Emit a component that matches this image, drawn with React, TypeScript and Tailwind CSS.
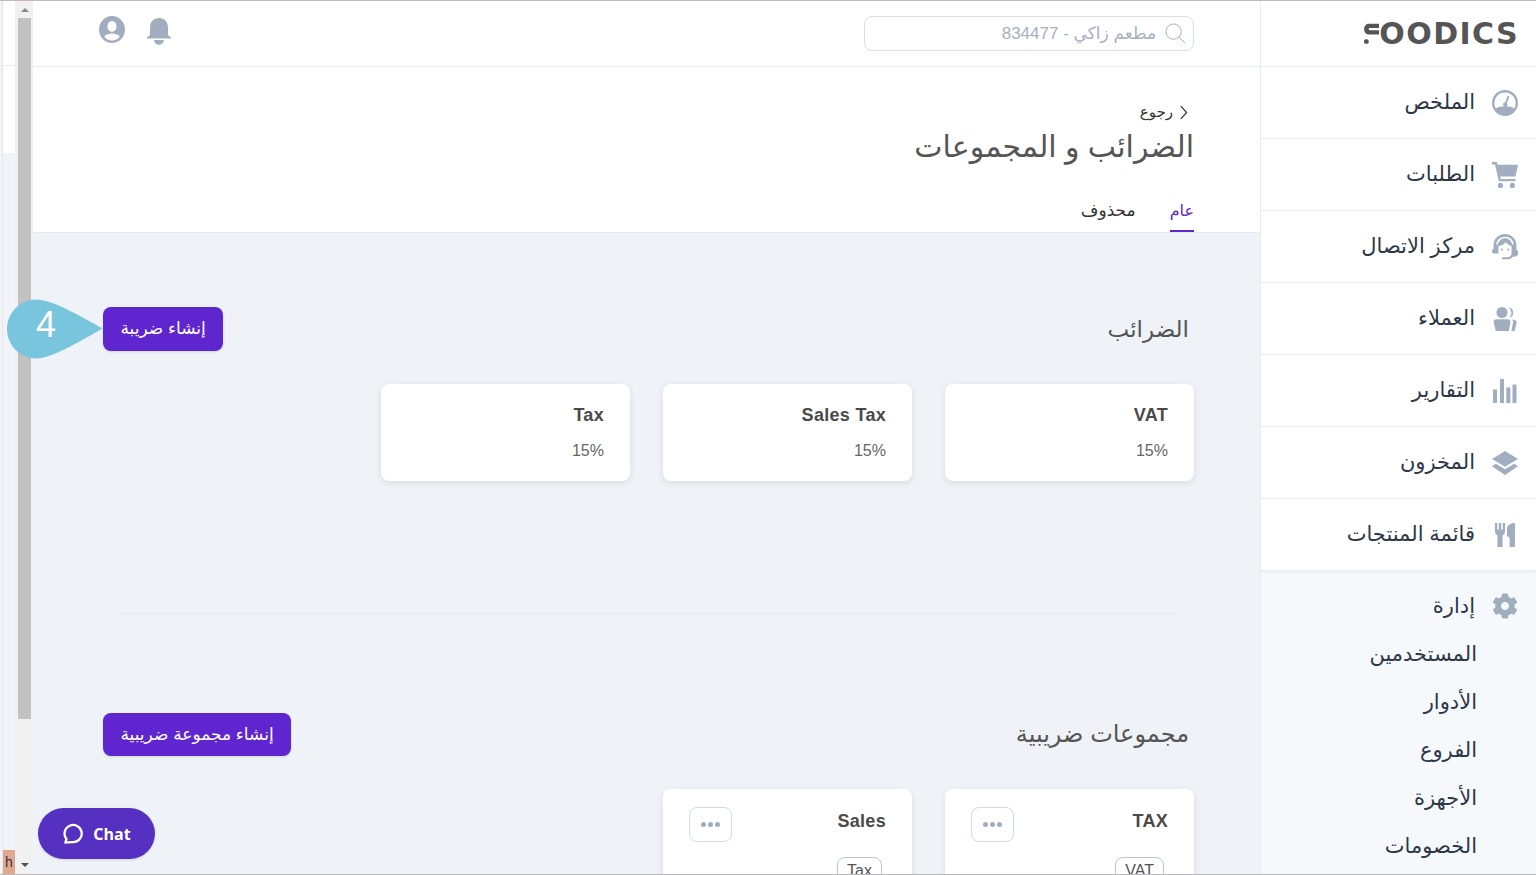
import React from 'react';
import { FaCog } from 'react-icons/fa';

const ICON = 'w-[26px] h-[26px] shrink-0 text-[#a0aec0]';
const ICON_NARROW = 'w-6 h-6 shrink-0 text-[#a0aec0]';

const GaugeIcon = () => (
  <svg viewBox="0 0 24 24" className={ICON} fill="currentColor">
    <path fillRule="evenodd" d="M12 0a12 12 0 1 1 0 24 12 12 0 0 1 0-24zm0 2.200a9.800 9.800 0 0 0-8.400 14.800C5.200 15.600 8.400 15 12 15s6.800.6 8.400 2A9.800 9.800 0 0 0 12 2.200z" />
    <path d="M14.400 5.400l1.700.7-2.300 6.100a2 2 0 1 1-1.700-.7z" />
  </svg>
);

const CartIcon = () => (
  <svg viewBox="0 0 24 24" className={ICON} fill="currentColor">
    <path d="M0 0h4.400l.9 2.600H24l-2.300 10.800H7.600l.5 2.200h13.600v2.200H6.300L2.800 2.200H0z" />
    <circle cx="7.800" cy="21.600" r="2.400" />
    <circle cx="18.800" cy="21.600" r="2.400" />
  </svg>
);

const HeadsetIcon = () => (
  <svg viewBox="0 0 24 24" className={ICON} fill="currentColor">
    <path fillRule="evenodd" d="M12 0c6.300 0 10.600 4.800 10.600 10.600v4.200l1.400 1v3.600l-3 1.600h-2.200a5 5 0 0 1-3 2.400H9.400v-2h5.200c2 0 3.400-1.600 3.400-3.700V11c-2.400-.3-4.200-1.800-5.200-3.600C11.400 9.600 9 11 6 11v7H1.600L0 17v-2.200l1.400-1v-3.200C1.400 4.800 5.700 0 12 0zm0 2.600c-4.400 0-7.800 3-8.200 7.200h1.400C6 6.400 8.700 4 12 4s6 2.400 6.800 5.800h1.400C19.800 5.600 16.400 2.600 12 2.600z" />
    <circle cx="9" cy="14.400" r="1" />
    <circle cx="15" cy="14.400" r="1" />
  </svg>
);

const UsersIcon = () => (
  <svg viewBox="0 0 24 24" className={ICON_NARROW} fill="currentColor">
    <circle cx="9" cy="5.500" r="5.500" />
    <path d="M15.500.300a5.500 5.500 0 0 1 1 10.600 7 7 0 0 0-1-10.600z" />
    <path d="M.5 15c0-1.600 1.200-2.800 2.800-2.800h11.400c1.600 0 2.800 1.200 2.800 2.800l-1.700 9H2.800z" />
    <path d="M19 12.400c2.500.2 4.800 1 4.800 3l-2.200 8.600h-3.200l1.600-8.800c0-1.100-.3-2-1-2.800z" />
  </svg>
);

const BarsIcon = () => (
  <svg viewBox="0 0 24 24" className={ICON_NARROW} fill="currentColor">
    <rect x="0" y="10.500" width="4" height="13.500" />
    <rect x="7" y="0" width="4" height="24" />
    <rect x="13.300" y="8.500" width="4" height="15.500" />
    <rect x="19.500" y="5.500" width="4" height="18.500" />
  </svg>
);

const LayersIcon = () => (
  <svg viewBox="0 0 24 24" className={ICON} fill="currentColor">
    <path d="M12 1l12 7.200-12 7.200L0 8.200z" />
    <path d="M3.600 12.800L12 17.800l8.400-5 3.600 2.200L12 23 0 15z" />
  </svg>
);

const CutleryIcon = () => (
  <svg viewBox="0 0 24 24" className={ICON_NARROW} fill="currentColor">
    <path d="M2 0h2.300v6.500h1.500V0h2.400v6.500h1.500V0H12v8c0 2.300-1 3.700-2.400 4.300V24H4.400V12.300C3 11.700 2 10.300 2 8z" />
    <path d="M22 0v24h-5.400v-9.500L14 13V6c0-3.500 3.500-6 8-6z" />
  </svg>
);

const navItems = [
  { label: 'الملخص', icon: <GaugeIcon /> },
  { label: 'الطلبات', icon: <CartIcon /> },
  { label: 'مركز الاتصال', icon: <HeadsetIcon /> },
  { label: 'العملاء', icon: <UsersIcon /> },
  { label: 'التقارير', icon: <BarsIcon /> },
  { label: 'المخزون', icon: <LayersIcon /> },
  { label: 'قائمة المنتجات', icon: <CutleryIcon /> },
];

const subItems = ['المستخدمين', 'الأدوار', 'الفروع', 'الأجهزة', 'الخصومات'];

const taxes = [
  { name: 'VAT', rate: '15%' },
  { name: 'Sales Tax', rate: '15%' },
  { name: 'Tax', rate: '15%' },
];

const groups = [
  { name: 'TAX', tag: 'VAT' },
  { name: 'Sales', tag: 'Tax' },
];

const Sidebar = () => (
  <aside className="w-[276px] shrink-0 border-l border-[#e6ebf5] bg-white flex flex-col">
    <div className="h-[66px] shrink-0 border-b border-[#e8edf5] flex items-center justify-end pr-[18px] flex-row-reverse">
      <div className="flex items-center" dir="ltr">
        <svg viewBox="0 0 16 22" className="w-[15px] h-[22px] text-[#555555]" fill="currentColor">
          <path d="M5 0h11v4.500H6c-1.300 0-1.300 2.500 0 2.500h10v4.500H5C-1.500 11.500-1.500 0 5 0z" />
          <rect x="0" y="16.500" width="5" height="5" rx="2" />
        </svg>
        <span className="font-['DejaVu_Sans',sans-serif] font-bold text-[30px] leading-none tracking-[1.400px] -mr-[1px] text-[#555555]">OODICS</span>
      </div>
    </div>
    {navItems.map((item) => (
      <div key={item.label} className="h-[72px] shrink-0 border-b border-[#e8edf5] flex items-center gap-[17px] pr-[18px] text-[#2d3748]">
        <div className="w-[26px] flex justify-center">{item.icon}</div>
        <span className="text-[21px] leading-7 -mt-[1px]">{item.label}</span>
      </div>
    ))}
    <div className="flex-1 bg-[#f6f9fc] pt-[11px] shadow-[inset_0_3px_4px_-3px_rgba(0,0,0,0.08)]">
      <div className="h-12 flex items-center gap-[17px] pr-[18px] text-[#2d3748]">
        <FaCog className={ICON} />
        <span className="text-[21px] leading-7 -mt-[1px]">إدارة</span>
      </div>
      {subItems.map((label) => (
        <div key={label} className="h-12 flex items-center pr-[59px] text-[21px] text-[#2d3748] pb-[1px]">{label}</div>
      ))}
    </div>
  </aside>
);

const TopBar = () => (
  <header className="h-[66px] shrink-0 border-b border-[#e8edf5] bg-white flex items-start justify-between pr-[66px] pl-[66px]">
    <div className="mt-[15px] w-[330px] h-[35px] border border-[#d6dfeb] rounded-lg flex items-center gap-[9px] pr-[7px]">
      <svg viewBox="0 0 22 22" className="w-[21px] h-[21px] shrink-0 text-[#a0aec0]" fill="none" stroke="currentColor" strokeWidth="1">
        <circle cx="9" cy="9" r="8" />
        <path d="M14.800 14.800l6.500 6.500" />
      </svg>
      <input
        readOnly
        placeholder="مطعم زاكي - 834477"
        className="flex-1 bg-transparent outline-none text-[17px] placeholder:text-[#a6b1c0] font-['Liberation_Sans','DejaVu_Sans',sans-serif]"
      />
    </div>
    <div className="mt-[15px] flex items-start gap-[22px]" dir="ltr">
      <svg viewBox="0 0 26 27" className="w-[26px] h-[27px] text-[#a0aec0]" fill="currentColor">
        <path fillRule="evenodd" d="M13 0a13 13.500 0 1 1 0 27 13 13.500 0 0 1 0-27zm0 5a4.600 5.400 0 1 0 0 10.800A4.600 5.400 0 0 0 13 5zM5.200 20.500C6.800 23 9.700 24.600 13 24.600s6.200-1.600 7.800-4.100c-1.500-2-4.500-3-7.800-3s-6.300 1-7.800 3z" />
      </svg>
      <svg viewBox="0 0 24 27" className="w-6 h-[27px] mt-[2px] text-[#a0aec0]" fill="currentColor">
        <path d="M12 0c5.500 0 9 4 9 9.500v6.500c0 1.500 1.500 2.500 3 3.200v1.300H0v-1.300c1.500-.7 3-1.700 3-3.200V9.500C3 4 6.500 0 12 0z" />
        <path d="M7 22h10c-.3 3-2.500 4.800-5 4.800S7.300 25 7 22z" />
      </svg>
    </div>
  </header>
);

const PageHead = () => (
  <div className="shrink-0 border-b border-[#e6ebf1] bg-white pt-[34px] pr-[66px]">
    <div className="h-[22px] flex items-center gap-[6px] text-[15px] text-[#333333]">
      <svg viewBox="0 0 10 16" className="w-[9px] h-[15px] mr-[6px] text-[#333333]" fill="none" stroke="currentColor" strokeWidth="1.300">
        <path d="M2 1l6.500 7L2 15" />
      </svg>
      <span>رجوع</span>
    </div>
    <h1 className="h-12 leading-[48px] text-[30px] text-[#555555] font-normal">الضرائب و المجموعات</h1>
    <div className="mt-[27px] flex gap-[34px]">
      <div className="pt-px h-[34px] leading-6 text-[16px] border-b-2 border-[#5f25cf] text-[#5f25cf]">عام</div>
      <div className="pt-px leading-6 text-[17px] text-[#333333]">محذوف</div>
    </div>
  </div>
);

const PrimaryButton = ({ label, height }: { label: string; height: string }) => (
  <button className={`${height} px-[17.5px] rounded-lg bg-[#5f25cf] text-white text-[17px] shadow-sm`}>{label}</button>
);

const TaxCard = ({ name, rate }: { name: string; rate: string }) => (
  <div className="w-[249px] h-[97px] bg-white rounded-lg shadow-[0_2px_6px_rgba(45,55,72,0.12)] pt-[19px] pr-[26px]">
    <div className="text-[18px] leading-6 font-bold tracking-[0.3px] text-[#4a4a4a]">{name}</div>
    <div className="mt-3 text-[16px] leading-6 text-[#666666]">{rate}</div>
  </div>
);

const GroupCard = ({ name, tag }: { name: string; tag: string }) => (
  <div className="w-[249px] h-[150px] bg-white rounded-lg shadow-[0_2px_6px_rgba(45,55,72,0.12)] pt-[18px] px-[26px]">
    <div className="flex items-start justify-between">
      <div className="text-[18px] leading-6 font-bold tracking-[0.3px] text-[#4a4a4a] mt-[2px]">{name}</div>
      <div className="w-[43px] h-[35px] border border-[#d2dae5] rounded-lg flex items-center justify-center gap-[2px]">
        <span className="w-[5px] h-[5px] rounded-full bg-[#a0aec0]" />
        <span className="w-[5px] h-[5px] rounded-full bg-[#a0aec0]" />
        <span className="w-[5px] h-[5px] rounded-full bg-[#a0aec0]" />
      </div>
    </div>
    <div className="mt-[15px] flex">
      <span className="mr-[4px] px-[9px] h-7 leading-[26px] border border-[#bcc6d3] rounded-lg text-[16px] text-[#555555]">{tag}</span>
    </div>
  </div>
);

const Content = () => (
  <div className="flex-1 min-h-0 overflow-hidden bg-[#eff3f7] pt-[74px] pr-[66px] pl-[70px]">
    <div className="h-11 flex items-center justify-between pr-[5px]">
      <h2 className="text-[23px] font-normal text-[#555555]">الضرائب</h2>
      <PrimaryButton label="إنشاء ضريبة" height="h-11" />
    </div>
    <div className="mt-[33px] flex gap-[33px]">
      {taxes.map((tax) => (
        <TaxCard key={tax.name} name={tax.name} rate={tax.rate} />
      ))}
    </div>
    <div className="mt-[132px] mr-[19px] ml-[17px] h-px bg-[#e6ebf0]" />
    <div className="mt-[99px] h-[43px] flex items-center justify-between pr-[5px]">
      <h2 className="text-[24px] leading-8 -mt-[2px] font-normal text-[#555555]">مجموعات ضريبية</h2>
      <PrimaryButton label="إنشاء مجموعة ضريبية" height="h-[43px]" />
    </div>
    <div className="mt-[33px] flex gap-[33px]">
      {groups.map((group) => (
        <GroupCard key={group.name} name={group.name} tag={group.tag} />
      ))}
    </div>
  </div>
);

const BrowserStrip = () => (
  <div className="w-[33px] shrink-0 relative flex bg-white" dir="ltr">
    <div className="w-[3px] bg-[#f3f4f6] border-r border-[#e4e6ea]" />
    <div className="w-3 flex flex-col">
      <div className="h-[65px] bg-white border-b border-[#e8edf5]" />
      <div className="h-[87px] bg-white" />
      <div className="flex-1 bg-[#f0f4f8]" />
      <div className="h-6 bg-[#e0a890] text-[14px] leading-6 text-center text-[#333333] font-['Liberation_Sans',sans-serif]">h</div>
    </div>
    <div className="w-[18px] bg-[#f1f1f1] flex flex-col items-center pl-px">
      <div className="h-[17px] flex items-center justify-center">
        <div className="w-0 h-0 border-x-[4px] border-x-transparent border-b-[4px] border-b-[#8a8a8a]" />
      </div>
      <div className="w-[13px] h-[701px] bg-[#c1c1c1]" />
      <div className="flex-1" />
      <div className="h-[17px] flex items-center justify-center mb-[1px]">
        <div className="w-0 h-0 border-x-[4px] border-x-transparent border-t-[4px] border-t-[#505050]" />
      </div>
    </div>
  </div>
);

export default function App() {
  return (
    <div dir="rtl" className="relative h-[875px] w-full overflow-hidden flex border-t border-b border-t-[#c8b9b4] border-b-[#b8b6bb] bg-white font-['Liberation_Sans','DejaVu_Sans',sans-serif]">
      <Sidebar />
      <main className="flex-1 min-w-0 flex flex-col">
        <TopBar />
        <PageHead />
        <Content />
      </main>
      <BrowserStrip />

      {/* step marker over the create button */}
      <div className="absolute left-[7px] top-[298px] w-[96px] h-[60px] flex items-center" dir="ltr">
        <svg viewBox="0 0 96 60" className="absolute inset-0 w-[96px] h-[60px] text-[#7ac5de]" fill="currentColor">
          <path d="M29.500 0.500C44 0.500 70 15 95.500 29.500 70 44 44 59.500 29.500 59.500 13 59.500 0 46 0 30S13 0.500 29.500 0.500z" />
        </svg>
        <span className="relative ml-[29px] -mt-[9px] text-[36px] leading-none text-white">4</span>
      </div>

      <button className="absolute left-[38px] top-[807px] w-[117px] h-[51px] rounded-full bg-[#5630c0] flex items-center justify-center gap-[10px] text-white font-['Open_Sans',sans-serif] font-bold text-[16px] shadow-sm" dir="ltr">
        <svg viewBox="0 0 22 22" className="w-[21px] h-[21px]" fill="none" stroke="currentColor" strokeWidth="2.400">
          <path d="M3.500 20.500l1.200-3.800A9 9 0 1 1 11 20c-2.500 0-5 .3-7.500.5z" strokeLinejoin="round" />
        </svg>
        <span>Chat</span>
      </button>
    </div>
  );
}
